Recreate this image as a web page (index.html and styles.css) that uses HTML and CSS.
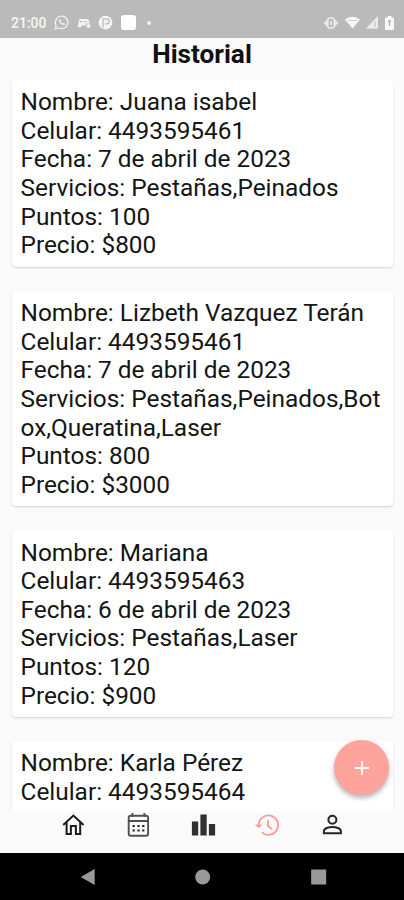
FILE: index.html
```html
<!DOCTYPE html>
<html lang="es">
<head>
    <meta charset="UTF-8">
    <meta name="viewport" content="width=device-width, initial-scale=1.0">
    <title>Historial</title>
    <link rel="stylesheet" href="styles.css">
</head>
<body>
    <div class="status-bar">
        <span class="time">21:00</span>
        <div class="notifications">
            <svg width="15" height="15" viewBox="0 0 24 24" fill="none" stroke="#f2f2f2" stroke-width="2">
                <path d="M2 22l1.5-5.3A10 10 0 1 1 7.3 20.5z"/>
                <path d="M8 7c-1 4 4.5 10 9 9l.5-2-2.5-1.5-1.5 1c-1.5-.7-2.5-1.7-3-3l1-1.5L10 7z" fill="#f2f2f2" stroke="none"/>
            </svg>
            <svg width="14" height="12" viewBox="0 0 28 24">
                <path fill="#f2f2f2" d="M6 4h14c3 0 4 2 5 6v3h-7v4h-7l-5 4c-4 1-5-2-4-6l2-8c.5-2 1-3 2-3z"/>
                <path d="M6 9h5M15 9h4" stroke="#bababa" stroke-width="2.5"/>
                <circle cx="23" cy="18" r="4" fill="#f2f2f2"/>
            </svg>
            <svg width="15" height="15" viewBox="0 0 24 24">
                <circle cx="12" cy="12" r="11" fill="#f5f5f5"/>
                <path d="M8 20V6h6a4 4 0 0 1 0 8h-3" fill="none" stroke="#bababa" stroke-width="2"/>
            </svg>
            <span class="app-square"></span>
            <span class="dot"></span>
        </div>
        <div class="system">
            <svg width="16" height="12" viewBox="0 0 16 12">
                <path d="M0.5 6l4-4v8zM15.5 6l-4-4v8z" fill="#e8e8e8"/>
                <rect x="4.8" y="1" width="6.4" height="10" rx="2" fill="none" stroke="#ededed" stroke-width="1.5"/>
                <path d="M8 4v4" stroke="#ededed" stroke-width="1.5"/>
            </svg>
            <svg width="15" height="13" viewBox="0 0 15 13">
                <path d="M0 3.5Q7.5-2 15 3.5L7.5 12.5z" fill="#f7f7f7"/>
                <path d="M3 4.5h9" stroke="#cfcfcf"/>
            </svg>
            <svg width="13" height="13" viewBox="0 0 13 13">
                <path d="M0 12.5L12 0v12.5z" fill="#ededed"/>
                <path d="M9 5v6" stroke="#bababa"/>
            </svg>
            <svg width="9" height="14" viewBox="0 0 9 14">
                <path d="M2.5 0h4v1.5H8a1 1 0 0 1 1 1V13a1 1 0 0 1-1 1H1a1 1 0 0 1-1-1V2.5a1 1 0 0 1 1-1h1.5z" fill="#f7f7f7"/>
                <path d="M3 5h3M4.5 5v5" stroke="#b0b0b0" stroke-width="1.3"/>
            </svg>
        </div>
    </div>

    <h1>Historial</h1>

    <main class="list">
        <div class="card">
            <p>Nombre: Juana isabel</p>
            <p>Celular: 4493595461</p>
            <p>Fecha: 7 de abril de 2023</p>
            <p>Servicios: Pestañas,Peinados</p>
            <p>Puntos: 100</p>
            <p>Precio: $800</p>
        </div>
        <div class="card">
            <p>Nombre: Lizbeth Vazquez Terán</p>
            <p>Celular: 4493595461</p>
            <p>Fecha: 7 de abril de 2023</p>
            <p>Servicios: Pestañas,Peinados,Botox,Queratina,Laser</p>
            <p>Puntos: 800</p>
            <p>Precio: $3000</p>
        </div>
        <div class="card">
            <p>Nombre: Mariana</p>
            <p>Celular: 4493595463</p>
            <p>Fecha: 6 de abril de 2023</p>
            <p>Servicios: Pestañas,Laser</p>
            <p>Puntos: 120</p>
            <p>Precio: $900</p>
        </div>
        <div class="card">
            <p>Nombre: Karla Pérez</p>
            <p>Celular: 4493595464</p>
        </div>
    </main>

    <button class="fab" aria-label="Agregar">
        <svg width="14" height="14" viewBox="0 0 14 14" stroke="#fff" stroke-width="1.8">
            <path d="M7 0v14M0 7h14"/>
        </svg>
    </button>

    <nav class="tabs">
        <svg width="26" height="26" viewBox="0 0 26 26" fill="none" stroke="#1c1c1c" stroke-width="2">
            <path d="M2.8 13L13 3.5L23.2 13M6.2 10.500v11.500h4.300v-8h5v8h4.300V10.500"/>
        </svg>
        <svg width="26" height="26" viewBox="0 0 26 26" fill="none" stroke="#505050" stroke-width="1.9">
            <rect x="3.3" y="3.8" width="19.4" height="20" rx="2"/>
            <path d="M3 9h20M7 1v4M19 1v4"/>
            <path d="M7.2 14h2.200M12 14h2.200M16.800 14H19M7.200 18.500h2.200M12 18.500h2.200M16.800 18.500H19" stroke="#222" stroke-width="2"/>
        </svg>
        <svg width="26" height="26" viewBox="0 0 26 26" fill="#303030">
            <path d="M1.5 9.500h6.300v14H1.500zM10 2.500h6.300v21H10zM18.500 12h6.200v11.500h-6.200z"/>
        </svg>
        <svg width="26" height="26" viewBox="0 0 26 26" fill="none" stroke="#f99c95" stroke-width="1.8">
            <path d="M4.3 13.500A9.700 9.700 0 1 1 7.500 20.300"/>
            <path d="M.5 12.500h7.500l-3.700 3.800z" fill="#f99c95" stroke="none"/>
            <path d="M13.5 8v6l4.300 3"/>
        </svg>
        <svg width="26" height="26" viewBox="0 0 26 26" fill="none" stroke="#252525" stroke-width="2">
            <circle cx="13" cy="7.7" r="4"/>
            <path d="M4.5 21.300v-2c0-3 5-4.300 8.500-4.300s8.500 1.300 8.500 4.300v2z"/>
        </svg>
    </nav>

    <div class="system-nav">
        <svg width="16" height="18" viewBox="0 0 16 18"><path d="M15 1v16L1 9z" fill="#999"/></svg>
        <svg width="16" height="16" viewBox="0 0 16 16"><circle cx="8" cy="8" r="7.5" fill="#999"/></svg>
        <svg width="16" height="16" viewBox="0 0 16 16"><rect x="0.5" y="0.5" width="15" height="15" fill="#999"/></svg>
    </div>
</body>
</html>
```
FILE: styles.css
```css
body {
    margin: 0;
    height: 900px;
    display: flex;
    flex-direction: column;
    position: relative;
    overflow: hidden;
    background-color: #fafafa;
    color: #151515;
    font-family: Roboto, sans-serif;
}

/* Android status bar */
.status-bar {
    flex: none;
    height: 38px;
    box-sizing: border-box;
    padding: 7px 10px 0 11px;
    display: flex;
    align-items: center;
    background-color: #bababa;
}
.time {
    width: 36px;
    margin-right: 7px;
    color: #f5f5f5;
    font-size: 14px;
    font-weight: 500;
}
.notifications {
    display: flex;
    align-items: center;
    gap: 7.5px;
}
.app-square {
    width: 15px;
    height: 15px;
    border-radius: 3px;
    background-color: #fff;
}
.dot {
    width: 4px;
    height: 4px;
    margin-left: 4px;
    border-radius: 50%;
    background-color: #f0f0f0;
}
.system {
    margin-left: auto;
    display: flex;
    align-items: center;
    gap: 6px;
}

h1 {
    flex: none;
    height: 42px;
    margin: 0;
    color: #101010;
    font-size: 26.2px;
    font-weight: 700;
    line-height: 32px;
    text-align: center;
}

/* Appointment cards */
.list {
    flex: 1;
    min-height: 0;
    padding: 0 11px 0 12px;
    overflow: hidden;
}
.card {
    margin-bottom: 23.9px;
    padding: 8.3px 9px 7.1px 8.5px;
    border-radius: 4px;
    background-color: #fff;
    box-shadow: 0 1px 2px rgba(0, 0, 0, 0.16);
}
.card p {
    margin: 0;
    font-size: 24.4px;
    line-height: 28.6px;
    word-break: break-all;
}

/* Floating add button */
.fab {
    position: absolute;
    right: 15px;
    top: 740px;
    width: 55px;
    height: 55px;
    padding: 0;
    display: flex;
    align-items: center;
    justify-content: center;
    border: none;
    border-radius: 50%;
    background-color: #ffa49d;
    box-shadow: 0 3px 5px rgba(0, 0, 0, 0.3);
}

.tabs {
    flex: none;
    height: 42px;
    padding: 0 39px 14px 41px;
    box-sizing: border-box;
    display: flex;
    align-items: center;
    background-color: #fafafa;
}
.tabs svg {
    flex: 1;
    min-width: 0;
}

.system-nav {
    flex: none;
    height: 47px;
    padding: 0 28px 0 30px;
    display: flex;
    align-items: center;
    background-color: #000;
}
.system-nav svg {
    flex: 1;
    min-width: 0;
}
```
